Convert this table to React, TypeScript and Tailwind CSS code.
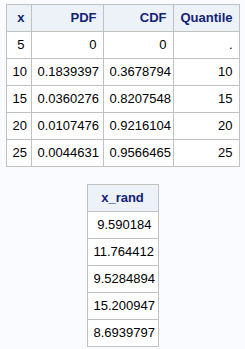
import React from "react";

const top = [
  ["5", "0", "0", "."],
  ["10", "0.1839397", "0.3678794", "10"],
  ["15", "0.0360276", "0.8207548", "15"],
  ["20", "0.0107476", "0.9216104", "20"],
  ["25", "0.0044631", "0.9566465", "25"],
];
const rand = ["9.590184", "11.764412", "9.5284894", "15.200947", "8.6939797"];

const th = "border border-[#c1c1c1] bg-[#edf2f9] text-[#112277] font-bold h-[27px] p-0 px-[6px] whitespace-nowrap";
const td = "border border-[#c1c1c1] bg-white text-black h-[27px] p-0 px-[6px] text-right whitespace-nowrap";

export default function App() {
  return (
    <div
      className="min-h-[349px] w-[245px] bg-[#fafbfe] pt-[4px] text-[13px] leading-[16px]"
      style={{ fontFamily: '"Liberation Sans", Arial, sans-serif' }}
    >
      <table className="mx-auto border-collapse table-fixed w-[233px]">
        <colgroup>
          <col className="w-[25px]" />
          <col className="w-[72px]" />
          <col className="w-[70px]" />
          <col className="w-[66px]" />
        </colgroup>
        <thead>
          <tr>
            <th className={th + " text-right px-[6px]"}>x</th>
            <th className={th + " text-right"}>PDF</th>
            <th className={th + " text-right"}>CDF</th>
            <th className={th + " text-right px-[3px]"}>Quantile</th>
          </tr>
        </thead>
        <tbody>
          {top.map((r, i) => (
            <tr key={i}>
              {r.map((c, j) => (
                <td key={j} className={td + (j === 0 ? " px-[5px]" : "")}>
                  {c}
                </td>
              ))}
            </tr>
          ))}
        </tbody>
      </table>
      <table className="mx-auto mt-[17px] border-collapse table-fixed w-[72px]">
        <thead>
          <tr>
            <th className={th + " text-center"}>x_rand</th>
          </tr>
        </thead>
        <tbody>
          {rand.map((c, i) => (
            <tr key={i}>
              <td className={td}>{c}</td>
            </tr>
          ))}
        </tbody>
      </table>
    </div>
  );
}
